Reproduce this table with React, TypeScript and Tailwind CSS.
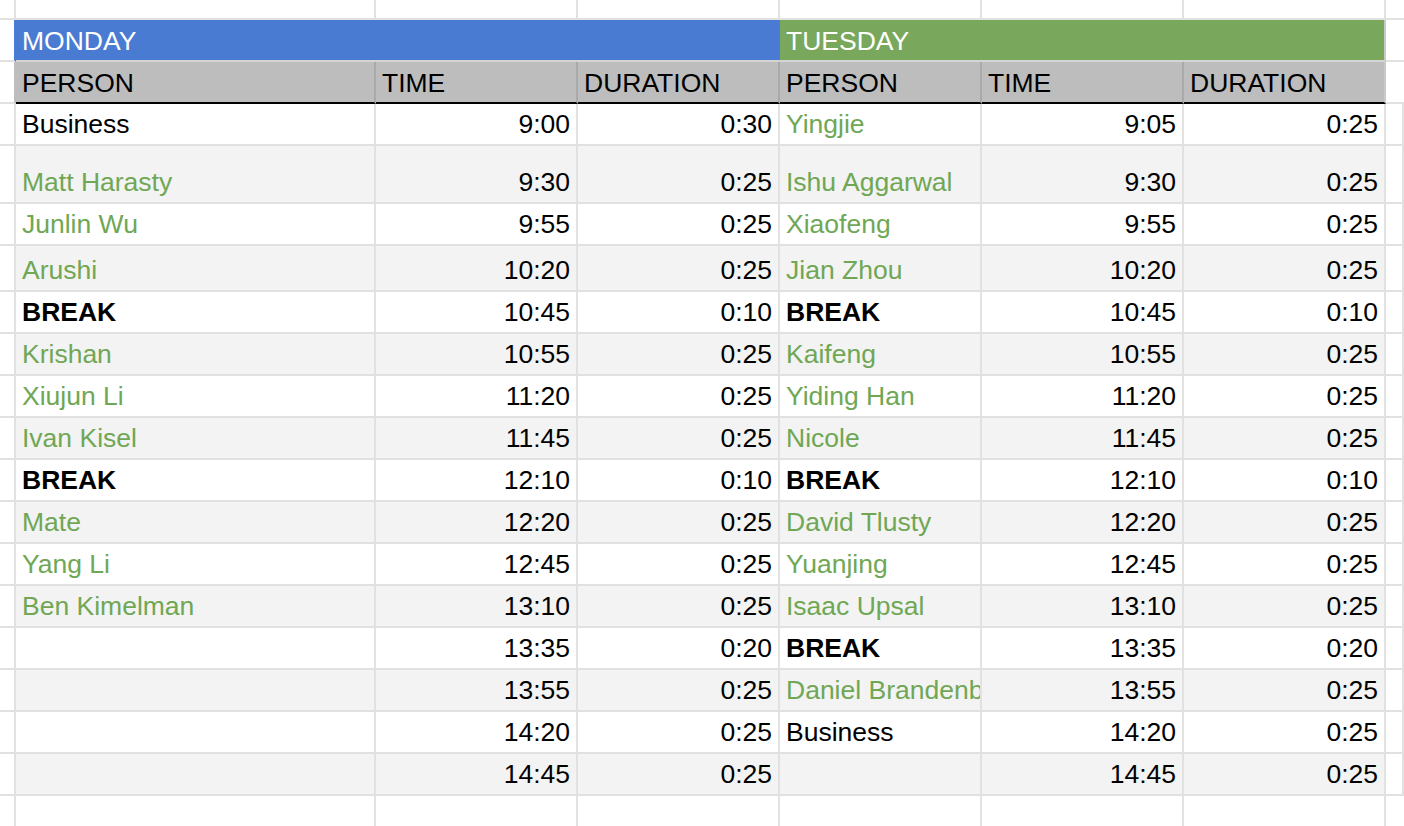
import React from "react";

type Kind = "name" | "plain" | "break" | "empty";
type Row = { h: string; mon: [string, Kind, string, string]; tue: [string, Kind, string, string] };

const rows: Row[] = [
  { h: "h-[42px]", mon: ["Business", "plain", "9:00", "0:30"], tue: ["Yingjie", "name", "9:05", "0:25"] },
  { h: "h-[58px]", mon: ["Matt Harasty", "name", "9:30", "0:25"], tue: ["Ishu Aggarwal", "name", "9:30", "0:25"] },
  { h: "h-[42px]", mon: ["Junlin Wu", "name", "9:55", "0:25"], tue: ["Xiaofeng", "name", "9:55", "0:25"] },
  { h: "h-[46px]", mon: ["Arushi", "name", "10:20", "0:25"], tue: ["Jian Zhou", "name", "10:20", "0:25"] },
  { h: "h-[42px]", mon: ["BREAK", "break", "10:45", "0:10"], tue: ["BREAK", "break", "10:45", "0:10"] },
  { h: "h-[42px]", mon: ["Krishan", "name", "10:55", "0:25"], tue: ["Kaifeng", "name", "10:55", "0:25"] },
  { h: "h-[42px]", mon: ["Xiujun Li", "name", "11:20", "0:25"], tue: ["Yiding Han", "name", "11:20", "0:25"] },
  { h: "h-[42px]", mon: ["Ivan Kisel", "name", "11:45", "0:25"], tue: ["Nicole", "name", "11:45", "0:25"] },
  { h: "h-[42px]", mon: ["BREAK", "break", "12:10", "0:10"], tue: ["BREAK", "break", "12:10", "0:10"] },
  { h: "h-[42px]", mon: ["Mate", "name", "12:20", "0:25"], tue: ["David Tlusty", "name", "12:20", "0:25"] },
  { h: "h-[42px]", mon: ["Yang Li", "name", "12:45", "0:25"], tue: ["Yuanjing", "name", "12:45", "0:25"] },
  { h: "h-[42px]", mon: ["Ben Kimelman", "name", "13:10", "0:25"], tue: ["Isaac Upsal", "name", "13:10", "0:25"] },
  { h: "h-[42px]", mon: ["", "empty", "13:35", "0:20"], tue: ["BREAK", "break", "13:35", "0:20"] },
  { h: "h-[42px]", mon: ["", "empty", "13:55", "0:25"], tue: ["Daniel Brandenburg", "name", "13:55", "0:25"] },
  { h: "h-[42px]", mon: ["", "empty", "14:20", "0:25"], tue: ["Business", "plain", "14:20", "0:25"] },
  { h: "h-[42px]", mon: ["", "empty", "14:45", "0:25"], tue: ["", "empty", "14:45", "0:25"] },
];

const grid = "grid grid-cols-[16px_360px_202px_202px_202px_202px_202px_1fr]";
const cellBase =
  "border-r-2 border-b-2 border-[#e1e1e1] flex items-end pb-[5px] overflow-hidden whitespace-nowrap";

function kindClass(k: Kind) {
  if (k === "name") return "text-[#6fa755]";
  if (k === "break") return "text-black font-bold";
  return "text-black";
}

function DataRow({ r, i }: { r: Row; i: number }) {
  const bg = i % 2 === 0 ? "bg-white" : "bg-[#f3f3f3]";
  return (
    <div className={`${grid} ${r.h}`}>
      <div className={`${cellBase} bg-white`} />
      <div className={`${cellBase} ${bg} pl-[6px]`}>
        <span className={kindClass(r.mon[1])}>{r.mon[0]}</span>
      </div>
      <div className={`${cellBase} ${bg} justify-end pr-[6px]`}>{r.mon[2]}</div>
      <div className={`${cellBase} ${bg} justify-end pr-[6px]`}>{r.mon[3]}</div>
      <div className={`${cellBase} ${bg} pl-[6px]`}>
        <span className={kindClass(r.tue[1])}>{r.tue[0]}</span>
      </div>
      <div className={`${cellBase} ${bg} justify-end pr-[6px]`}>{r.tue[2]}</div>
      <div className={`${cellBase} ${bg} justify-end pr-[6px]`}>{r.tue[3]}</div>
      <div className={`${cellBase} bg-white border-r-0`} />
    </div>
  );
}

export default function App() {
  const headerCell =
    "bg-[#bdbdbd] border-r-2 border-[#a9a9a9] border-b-2 border-b-black flex items-end pb-[4px] pl-[6px] text-black";
  return (
    <div
      className="w-[1404px] h-[826px] overflow-hidden bg-white text-[26.5px] leading-[30px] text-black"
      style={{ fontFamily: '"Liberation Sans", Arial, sans-serif' }}
    >
      {/* top blank row */}
      <div className={`${grid} h-[20px]`}>
        {Array.from({ length: 8 }).map((_, k) => (
          <div key={k} className={`border-b-2 border-[#e1e1e1] ${k < 7 ? "border-r-2" : ""}`} />
        ))}
      </div>
      {/* day header row */}
      <div className={`${grid} h-[42px]`}>
        <div className="border-b-2 border-r-2 border-[#e1e1e1] border-r-[#4a7bd2]" />
        <div className="col-span-3 bg-[#4a7bd2] border-b-2 border-[#d4d4d4] flex items-end pb-[4px] pl-[6px] text-white">
          MONDAY
        </div>
        <div className="col-span-3 bg-[#79a75b] border-b-2 border-[#d4d4d4] border-r-2 border-r-[#c9c9c9] flex items-end pb-[4px] pl-[6px] text-white">
          TUESDAY
        </div>
        <div className="border-b-2 border-[#e1e1e1]" />
      </div>
      {/* column header row */}
      <div className={`${grid} h-[42px]`}>
        <div className="border-b-2 border-r-2 border-[#e1e1e1] border-r-[#bdbdbd]" />
        <div className={headerCell}>PERSON</div>
        <div className={headerCell}>TIME</div>
        <div className={headerCell}>DURATION</div>
        <div className={headerCell}>PERSON</div>
        <div className={headerCell}>TIME</div>
        <div className={`${headerCell} border-r-[#c9c9c9]`}>DURATION</div>
        <div className="border-b-2 border-[#e1e1e1]" />
      </div>
      {rows.map((r, i) => (
        <DataRow key={i} r={r} i={i} />
      ))}
      {/* trailing empty row */}
      <div className={`${grid} h-[42px]`}>
        {Array.from({ length: 8 }).map((_, k) => (
          <div key={k} className={`border-b-2 border-[#e1e1e1] ${k < 7 ? "border-r-2" : ""}`} />
        ))}
      </div>
    </div>
  );
}
